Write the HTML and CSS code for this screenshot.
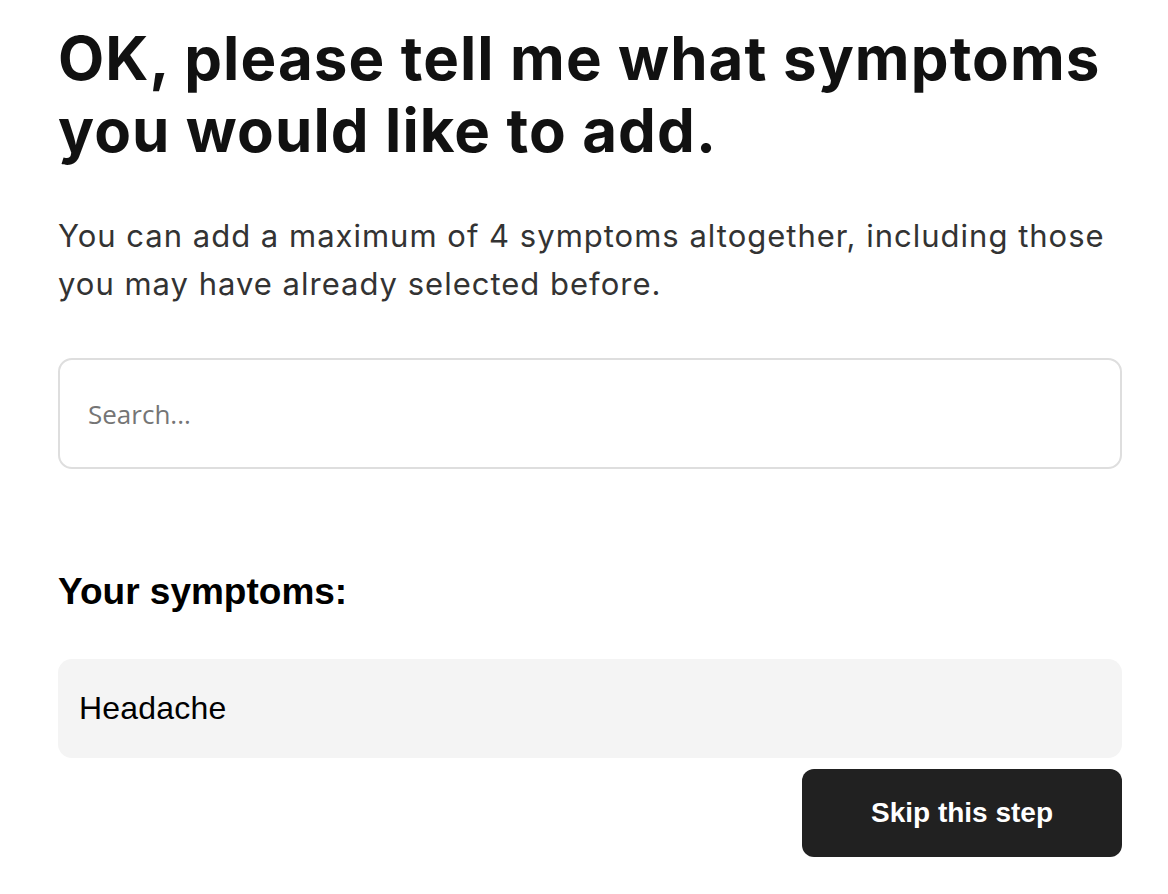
FILE: index.html
```html
<!DOCTYPE html>
<html>
<head>
<meta charset="utf-8">
<link rel="stylesheet" href="styles.css">
</head>
<body>
<main class="page">
  <h1 class="title">OK, please tell me what symptoms you would like to add.</h1>
  <p class="intro">You can add a maximum of 4 symptoms altogether, including those you may have already selected before.</p>
  <div class="search">
    <input class="search-input" type="text" placeholder="Search...">
  </div>
  <h2 class="subtitle">Your symptoms:</h2>
  <div class="symptom">Headache</div>
  <div class="actions">
    <button class="skip">Skip this step</button>
  </div>
</main>
</body>
</html>
```
FILE: styles.css
```css
html, body {
  margin: 0;
  padding: 0;
  background: #fff;
}
.page {
  width: 1064px;
  margin: 0 0 0 58px;
  padding-top: 22px;
  display: flex;
  flex-direction: column;
}
.title {
  margin: 0;
  font-family: "Inter", sans-serif;
  font-weight: 700;
  font-size: 60px;
  line-height: 72px;
  color: #111;
  letter-spacing: 1.1px;
}
.intro {
  margin: 46px 0 0 0;
  font-family: "Inter", sans-serif;
  font-size: 31px;
  line-height: 48px;
  color: #333;
  letter-spacing: 1px;
}
.search {
  margin-top: 50px;
}
.search-input {
  box-sizing: border-box;
  width: 100%;
  height: 111px;
  border: 2px solid #dedede;
  border-radius: 14px;
  padding: 0 28px;
  font-family: "Open Sans", sans-serif;
  font-size: 26px;
  color: #333;
  outline: none;
}
.search-input::placeholder {
  color: #757575;
}
.subtitle {
  margin: 103px 0 0 0;
  font-family: "Liberation Sans", Arial, sans-serif;
  font-weight: bold;
  font-size: 37px;
  line-height: 40px;
  letter-spacing: 0;
  color: #000;
}
.symptom {
  margin-top: 47px;
  box-sizing: border-box;
  height: 99px;
  background: #f4f4f4;
  border-radius: 14px;
  padding: 0 21px;
  display: flex;
  align-items: center;
  font-family: "Liberation Sans", Arial, sans-serif;
  font-size: 32px;
  letter-spacing: 0.2px;
  color: #000;
}
.actions {
  display: flex;
  justify-content: flex-end;
  margin-top: 11px;
}
.skip {
  width: 320px;
  height: 88px;
  background: #212121;
  color: #fff;
  border: none;
  border-radius: 12px;
  font-family: "Liberation Sans", Arial, sans-serif;
  font-weight: bold;
  font-size: 28px;
}
```
